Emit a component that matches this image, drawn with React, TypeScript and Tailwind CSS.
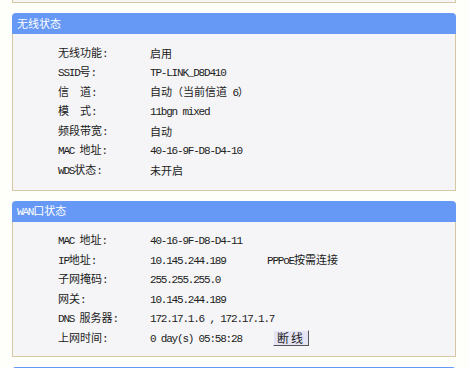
import React from "react";

// 拆分中英文, 英文部分用等宽字体
function Mixed({ text }: { text: string }) {
  const parts = text.split(/([\x20-\x7e]+)/);
  return (
    <span>
      {parts.map((p, i) =>
        /^[\x20-\x7e]+$/.test(p) ? (
          <span
            key={i}
            className="font-['Liberation_Mono',monospace] text-[11px] tracking-[-1.2px] whitespace-pre"
          >
            {p}
          </span>
        ) : (
          <span key={i} className="whitespace-pre">
            {p}
          </span>
        )
      )}
    </span>
  );
}

interface Row {
  label: string;
  value: string;
  extra?: React.ReactNode;
}

const wireless: Row[] = [
  { label: "无线功能:", value: "启用" },
  { label: "SSID号:", value: "TP-LINK_D8D410" },
  { label: "信　道:", value: "自动（当前信道 6）" },
  { label: "模　式:", value: "11bgn mixed" },
  { label: "频段带宽:", value: "自动" },
  { label: "MAC 地址:", value: "40-16-9F-D8-D4-10" },
  { label: "WDS状态:", value: "未开启" },
];

const wan: Row[] = [
  { label: "MAC 地址:", value: "40-16-9F-D8-D4-11" },
  {
    label: "IP地址:",
    value: "10.145.244.189",
    extra: <Mixed text="PPPoE按需连接" />,
  },
  { label: "子网掩码:", value: "255.255.255.0" },
  { label: "网关:", value: "10.145.244.189" },
  { label: "DNS 服务器:", value: "172.17.1.6 , 172.17.1.7" },
  {
    label: "上网时间:",
    value: "0 day(s) 05:58:28",
    extra: (
      <button className="ml-[6px] h-[16px] w-[36px] flex items-center justify-center bg-[#e4e4f4] border border-t-[#f4f4ff] border-l-[#f4f4ff] border-b-[#555] border-r-[#555] text-[12px] text-[#222] tracking-[2px] leading-none">
        断线
      </button>
    ),
  },
];

function Panel({ title, rows, pb }: { title: string; rows: Row[]; pb: string }) {
  return (
    <div>
      <div className="h-[21px] bg-[#6698f6] rounded-t-[4px] flex items-center pl-[5px] text-white text-[11px]">
        <Mixed text={title} />
      </div>
      <div className={`bg-[#f5f5f7] border-x border-b border-[#d6c8a2] pt-[9px] ${pb}`}>
        {rows.map((r, i) => (
          <div key={i} className="h-[19.5px] flex items-center text-[11px] text-[#1a1a1a]">
            <div className="w-[137px] pl-[45px] shrink-0">
              <Mixed text={r.label} />
            </div>
            <div className="w-[117px] shrink-0 text-[#222]">
              <Mixed text={r.value} />
            </div>
            {r.extra && <div>{r.extra}</div>}
          </div>
        ))}
      </div>
    </div>
  );
}

export default function App() {
  return (
    <div className="w-[469px] h-[368px] overflow-hidden bg-[#fefefb] font-['Noto_Sans_CJK_SC',sans-serif]">
      <div className="ml-[12px] w-[444px] flex flex-col gap-[10px]">
        <div className="h-[3px] bg-[#f5f5f7] border-x border-b border-[#d6c8a2]" />
        <Panel title="无线状态" rows={wireless} pb="pb-[10px]" />
        <Panel title="WAN口状态" rows={wan} pb="pb-[8px]" />
        <div className="h-[21px] bg-[#6698f6] rounded-t-[4px]" />
      </div>
    </div>
  );
}
